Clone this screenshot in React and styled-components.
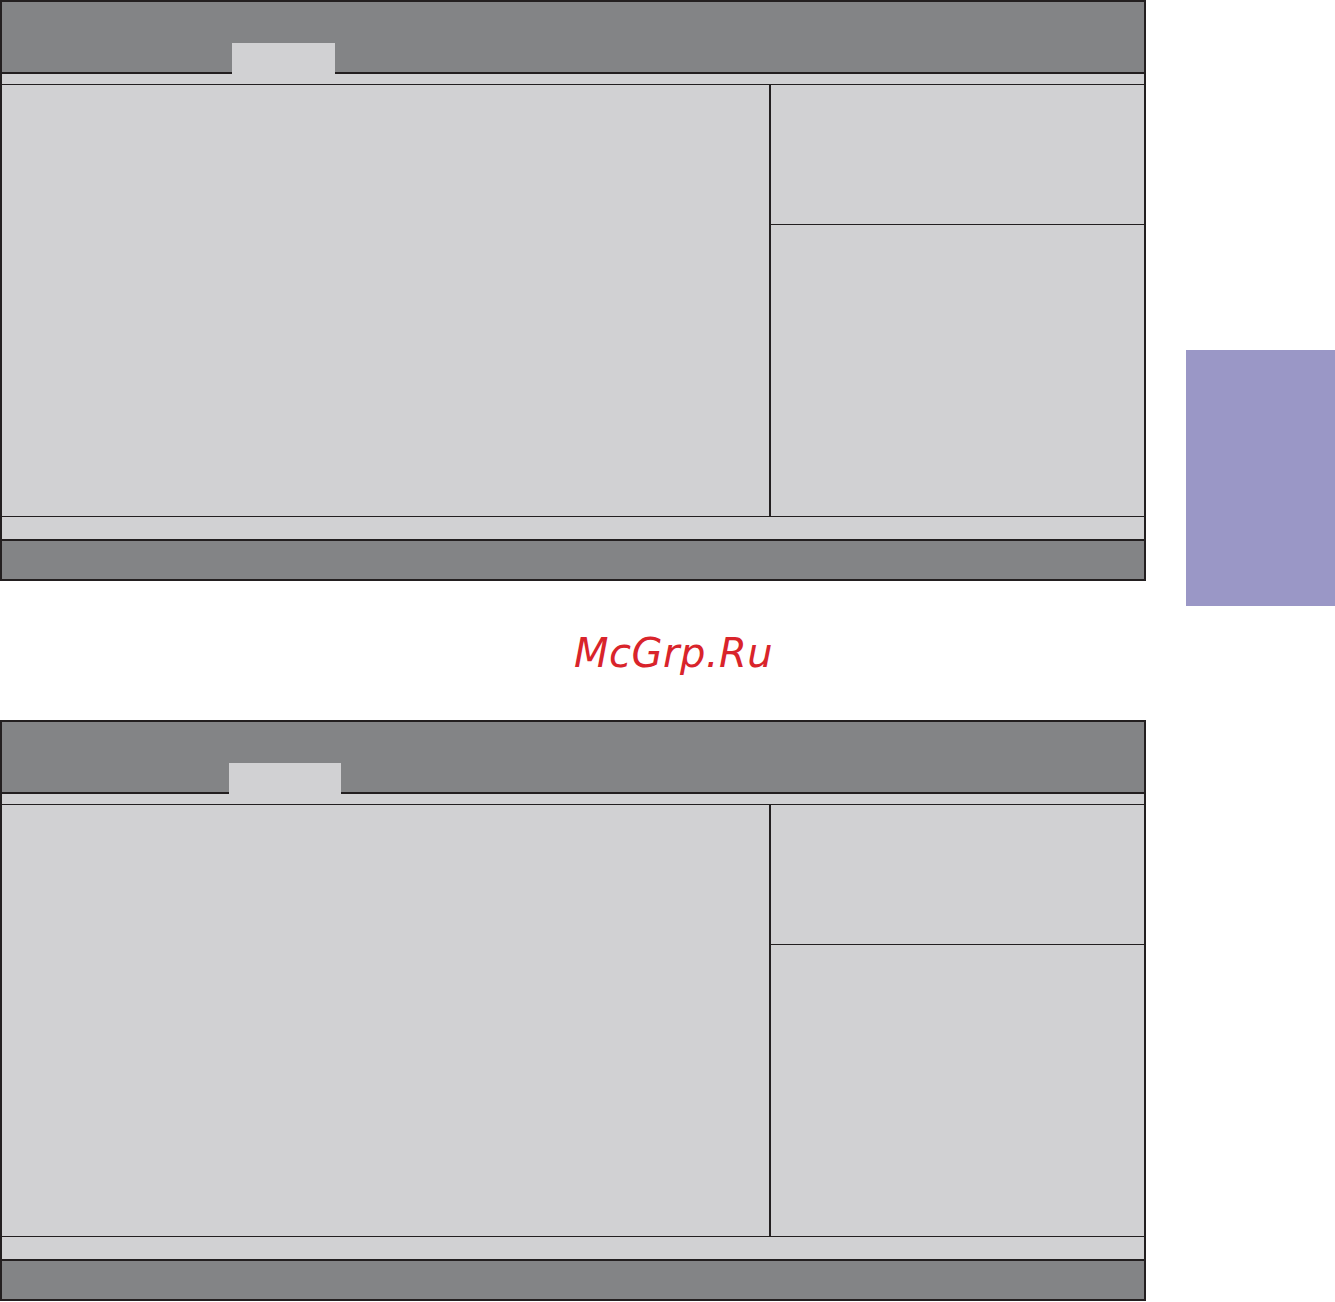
import styled, { createGlobalStyle } from "styled-components";

const GlobalStyle = createGlobalStyle`
  html, body {
    margin: 0;
    padding: 0;
    background: #ffffff;
    font-family: "DejaVu Sans", "Liberation Sans", sans-serif;
  }
`;

const frames = [
  { id: 1, tabOffset: 230, tabWidth: 103 },
  { id: 2, tabOffset: 227, tabWidth: 112 },
];

export default function App() {
  return (
    <>
      <GlobalStyle />
      <Page>
        <MainColumn>
          <BiosFrame {...frames[0]} />
          <Watermark>
            <WatermarkText>McGrp.Ru</WatermarkText>
          </Watermark>
          <BiosFrame {...frames[1]} />
        </MainColumn>
        <SideColumn>
          <ChapterTab />
        </SideColumn>
      </Page>
    </>
  );
}

function BiosFrame({ tabOffset, tabWidth }) {
  return (
    <Frame>
      <Header $offset={tabOffset}>
        <Tab $width={tabWidth} />
      </Header>
      <SubStrip />
      <Body>
        <MainPanel />
        <HelpPanel>
          <HelpTop />
          <HelpBottom />
        </HelpPanel>
      </Body>
      <StatusStrip />
      <Footer />
    </Frame>
  );
}

const Page = styled.div`
  display: grid;
  grid-template-columns: 1146px 149px;
  column-gap: 40px;
  width: 1335px;
`;

const MainColumn = styled.div`
  display: flex;
  flex-direction: column;
`;

const SideColumn = styled.div`
  padding-top: 350px;
`;

const ChapterTab = styled.div`
  height: 256px;
  background: #9a97c6;
`;

const Frame = styled.div`
  box-sizing: border-box;
  width: 1146px;
  height: 581px;
  border: 2px solid #231f20;
  display: flex;
  flex-direction: column;
  background: #d1d1d3;
`;

const Header = styled.div`
  height: 70px;
  flex-shrink: 0;
  background: #838486;
  border-bottom: 2px solid #231f20;
  display: flex;
  align-items: flex-end;
  padding-left: ${(p) => p.$offset}px;
`;

const Tab = styled.div`
  width: ${(p) => p.$width}px;
  height: 31px;
  margin-bottom: -2px;
  background: #d1d1d3;
`;

const SubStrip = styled.div`
  height: 10px;
  flex-shrink: 0;
  border-bottom: 1px solid #231f20;
`;

const Body = styled.div`
  height: 431px;
  flex-shrink: 0;
  display: grid;
  grid-template-columns: 767px 1fr;
  border-bottom: 1px solid #231f20;
`;

const MainPanel = styled.div``;

const HelpPanel = styled.div`
  border-left: 2px solid #231f20;
  display: flex;
  flex-direction: column;
`;

const HelpTop = styled.div`
  height: 139px;
  border-bottom: 1px solid #231f20;
`;

const HelpBottom = styled.div`
  flex: 1;
`;

const StatusStrip = styled.div`
  height: 22px;
  flex-shrink: 0;
  border-bottom: 2px solid #231f20;
`;

const Footer = styled.div`
  flex: 1;
  background: #838486;
`;

const Watermark = styled.div`
  height: 139px;
  box-sizing: border-box;
  padding-top: 52px;
  padding-left: 574px;
`;

const WatermarkText = styled.span`
  display: block;
  font-family: "DejaVu Sans", "Liberation Sans", sans-serif;
  font-style: italic;
  font-size: 40px;
  line-height: 40px;
  color: #d9242b;
  letter-spacing: 0.5px;
`;
